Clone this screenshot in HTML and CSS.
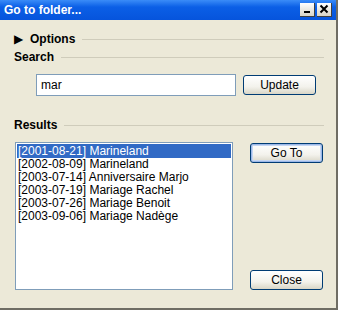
FILE: index.html
```html
<!DOCTYPE html>
<html lang="fr">
<head>
    <meta charset="UTF-8">
    <title>Go to folder...</title>
    <link rel="stylesheet" href="styles.css">
</head>
<body>
    <div class="window">
        <div class="titlebar">
            <span class="title">Go to folder...</span>
            <span class="tb-btn">
                <svg width="14" height="13" viewBox="0 0 14 13"><rect x="4" y="8" width="6" height="2" fill="#000"/></svg>
            </span>
            <span class="tb-btn">
                <svg width="14" height="13" viewBox="0 0 14 13"><path d="M3.5 2.5 L10.5 9.5 M10.5 2.5 L3.5 9.5" stroke="#000" stroke-width="2"/></svg>
            </span>
        </div>

        <div class="content">
            <div class="group-head">
                <span class="arrow">&#9654;</span>
                <span class="label">Options</span>
                <span class="line"></span>
            </div>
            <div class="group-head">
                <span class="label">Search</span>
                <span class="line"></span>
            </div>
            <div class="search-row">
                <input class="field" type="text" value="mar">
                <button class="btn">Update</button>
            </div>

            <div class="group-head results-head">
                <span class="label">Results</span>
                <span class="line"></span>
            </div>
            <div class="results-row">
                <ul class="list">
                    <li class="selected">[2001-08-21] Marineland</li>
                    <li>[2002-08-09] Marineland</li>
                    <li>[2003-07-14] Anniversaire Marjo</li>
                    <li>[2003-07-19] Mariage Rachel</li>
                    <li>[2003-07-26] Mariage Benoit</li>
                    <li>[2003-09-06] Mariage Nadège</li>
                </ul>
                <div class="side-buttons">
                    <button class="btn default">Go To</button>
                    <button class="btn">Close</button>
                </div>
            </div>
        </div>
    </div>
</body>
</html>
```

FILE: styles.css
```css
body {
    margin: 0;
    background: #ece9d8;
    font-family: "Liberation Sans", Arial, sans-serif;
    font-size: 12px;
    color: #000;
}
.window {
    width: 336px;
    height: 308px;
    border-right: 2px solid #6f6d64;
    border-bottom: 2px solid #6f6d64;
    background: #ece9d8;
    display: flex;
    flex-direction: column;
}
.titlebar {
    height: 20px;
    background: linear-gradient(#3a8cf8, #0b5fe6 35%, #0654dc);
    display: flex;
    align-items: center;
    padding: 0 4px 0 4px;
    gap: 2px;
}
.title {
    flex: 1;
    color: #fff;
    font-weight: bold;
    font-size: 12px;
}
.tb-btn {
    width: 14px;
    height: 13px;
    background: linear-gradient(#fff, #d8d4c6);
    border-right: 1px solid #404040;
    border-bottom: 1px solid #404040;
    display: flex;
}
.content {
    flex: 1;
    padding: 12px 12px 0 14px;
    display: flex;
    flex-direction: column;
}
.group-head {
    height: 14px;
    display: flex;
    align-items: center;
    margin-bottom: 4px;
}
.label {
    font-weight: bold;
    font-size: 12px;
}
.arrow {
    font-size: 12px;
    margin-right: 5px;
    width: 11px;
}
.line {
    flex: 1;
    border-top: 1px solid #cfccbb;
    margin-left: 7px;
}
.search-row {
    display: flex;
    align-items: center;
    margin: 6px 0 0 22px;
    height: 22px;
}
.field {
    width: 200px;
    height: 22px;
    box-sizing: border-box;
    border: 1px solid #7f9db9;
    padding: 0 4px;
    font-family: inherit;
    font-size: 12px;
    background: #fff;
    outline: none;
}
.btn {
    width: 73px;
    height: 20px;
    border: 1px solid #003c74;
    border-radius: 3px;
    background: linear-gradient(#ffffff, #f3f2ec 60%, #d9d6c7);
    font-family: inherit;
    font-size: 12px;
    padding: 0;
    color: #000;
}
.search-row .btn {
    margin-left: 7px;
}
.btn.default {
    box-shadow: inset 0 0 0 1px #9cb8e8, inset 0 0 0 2px #c5d6f2;
}
.results-head {
    margin-top: 22px;
}
.results-row {
    display: flex;
    margin-top: 6px;
    gap: 17px;
}
.list {
    list-style: none;
    margin: 0 0 0 1px;
    padding: 1px;
    width: 218px;
    height: 148px;
    box-sizing: border-box;
    border: 1px solid #7f9db9;
    background: #fff;
}
.list li {
    height: 13px;
    line-height: 13px;
    padding-left: 1px;
    white-space: nowrap;
}
.list li.selected {
    background: #316ac5;
    color: #fff;
    height: 14px;
    line-height: 14px;
}
.side-buttons {
    display: flex;
    flex-direction: column;
    justify-content: space-between;
    padding-top: 1px;
}
```
